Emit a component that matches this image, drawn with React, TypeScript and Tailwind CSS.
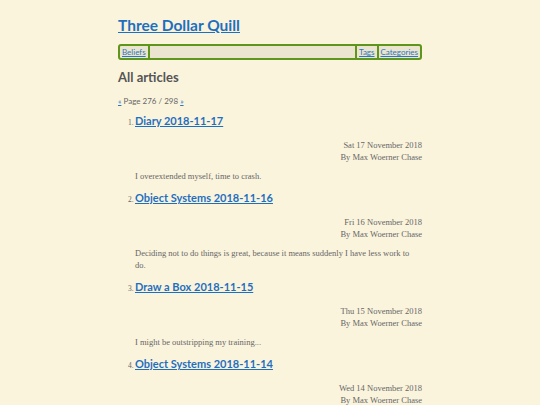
const articles = [
  {
    title: 'Diary 2018-11-17',
    date: 'Sat 17 November 2018',
    summary: 'I overextended myself, time to crash.',
  },
  {
    title: 'Object Systems 2018-11-16',
    date: 'Fri 16 November 2018',
    summary:
      'Deciding not to do things is great, because it means suddenly I have less work to do.',
  },
  {
    title: 'Draw a Box 2018-11-15',
    date: 'Thu 15 November 2018',
    summary: 'I might be outstripping my training...',
  },
  {
    title: 'Object Systems 2018-11-14',
    date: 'Wed 14 November 2018',
    summary: '',
  },
];

const sans = "font-['Lato','Open_Sans',sans-serif]";
const serif = "font-['Liberation_Serif','DejaVu_Serif',serif]";

export default function App() {
  return (
    <div className="min-h-[405px] bg-[#fbf4dd] text-[#555]">
      <div className="mx-auto w-[304px] pt-[13px]">
        <h1 className={`${sans} text-[15.5px] font-bold leading-[24px]`}>
          <a href="#" className="text-[#1f6fbf] underline">
            Three Dollar Quill
          </a>
        </h1>

        <nav
          className={`${sans} mt-[7px] flex h-[16px] items-center rounded-[3px] border-2 border-[#5d961a] bg-[#ebe4cf] text-[8px] leading-[12px]`}
        >
          <a href="#" className="border-r-2 border-[#5d961a] px-[2px] text-[#2a78bd] underline">
            Beliefs
          </a>
          <span className="flex-1" />
          <a href="#" className="border-l-2 border-[#5d961a] px-[2px] text-[#2a78bd] underline">
            Tags
          </a>
          <a href="#" className="border-l-2 border-[#5d961a] px-[2px] text-[#2a78bd] underline">
            Categories
          </a>
        </nav>

        <h2 className={`${sans} mt-[8px] text-[13px] font-bold leading-[18px] text-[#555]`}>
          All articles
        </h2>

        <p className={`${sans} mt-[9px] text-[8px] leading-[12px] text-[#666]`}>
          <a href="#" className="text-[#2a78bd] underline">«</a> Page 276 / 298{' '}
          <a href="#" className="text-[#2a78bd] underline">»</a>
        </p>

        <ol className="mt-[5px]">
          {articles.map((a, i) => (
            <li key={a.title} className="mb-[7px]">
              <div className="flex items-baseline pl-[10px]">
                <span className={`${serif} w-[7px] text-[7.5px] text-[#666]`}>{i + 1}.</span>
                <a
                  href="#"
                  className={`${sans} text-[11px] font-bold leading-[18px] text-[#1f6fbf] underline`}
                >
                  {a.title}
                </a>
              </div>
              <div className={`${serif} mt-[9px] text-right text-[8.5px] leading-[12px] text-[#666]`}>
                <div>{a.date}</div>
                <div>By Max Woerner Chase</div>
              </div>
              {a.summary && (
                <p className={`${serif} mt-[7px] pl-[17px] text-[8.5px] leading-[12px] text-[#666]`}>
                  {a.summary}
                </p>
              )}
            </li>
          ))}
        </ol>
      </div>
    </div>
  );
}
